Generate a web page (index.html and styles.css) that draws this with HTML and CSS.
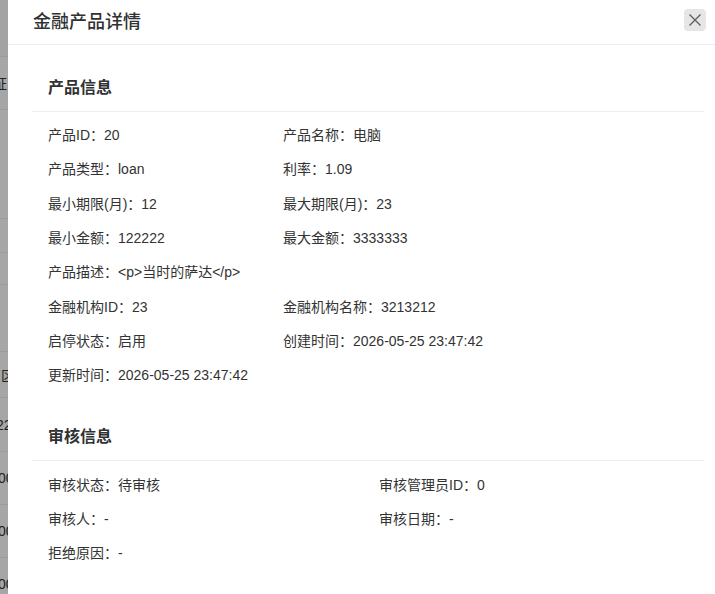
FILE: index.html
```html
<!DOCTYPE html>
<html lang="zh-CN">
<head>
    <meta charset="UTF-8">
    <meta name="viewport" content="width=device-width, initial-scale=1.0">
    <title>金融产品详情</title>
    <link rel="stylesheet" href="styles.css">
</head>
<body>
    <!-- page behind the drawer -->
    <div class="page">
        <div class="prow r-head"></div>
        <div class="prow r1"><span class="cell c-zheng">证</span></div>
        <div class="prow r2"></div>
        <div class="prow r3"></div>
        <div class="prow r4"></div>
        <div class="prow r5"></div>
        <div class="prow r6"><span class="cell c-qu">区</span></div>
        <div class="prow r7"><span class="cell c-num">222</span></div>
        <div class="prow r8"><span class="cell c-zero">000</span></div>
        <div class="prow r8"><span class="cell c-zero">000</span></div>
        <div class="prow r8"><span class="cell c-zero">000</span></div>
    </div>

    <div class="mask"></div>

    <div class="drawer">
        <div class="drawer-head">
            <span class="drawer-title">金融产品详情</span>
            <span class="close-btn">
                <svg width="14" height="14" viewBox="0 0 14 14">
                    <path d="M1.5 1.5 L12.5 12.5 M12.5 1.5 L1.5 12.5" stroke="#5f6266" stroke-width="1.4" fill="none"/>
                </svg>
            </span>
        </div>

        <div class="drawer-body">
            <div class="card">
                <div class="card-head">产品信息</div>
                <div class="card-body grid-a">
                    <div class="item">产品ID：20</div>
                    <div class="item">产品名称：电脑</div>
                    <div class="item">产品类型：loan</div>
                    <div class="item">利率：1.09</div>
                    <div class="item">最小期限(月)：12</div>
                    <div class="item">最大期限(月)：23</div>
                    <div class="item">最小金额：122222</div>
                    <div class="item">最大金额：3333333</div>
                    <div class="item full">产品描述：&lt;p&gt;当时的萨达&lt;/p&gt;</div>
                    <div class="item">金融机构ID：23</div>
                    <div class="item">金融机构名称：3213212</div>
                    <div class="item">启停状态：启用</div>
                    <div class="item">创建时间：2026-05-25 23:47:42</div>
                    <div class="item">更新时间：2026-05-25 23:47:42</div>
                </div>
            </div>

            <div class="card">
                <div class="card-head">审核信息</div>
                <div class="card-body grid-b">
                    <div class="item">审核状态：待审核</div>
                    <div class="item">审核管理员ID：0</div>
                    <div class="item">审核人：-</div>
                    <div class="item">审核日期：-</div>
                    <div class="item">拒绝原因：-</div>
                </div>
            </div>
        </div>
    </div>
</body>
</html>
```

FILE: styles.css
```css
*{
    margin: 0;
    padding: 0;
    box-sizing: border-box;
}
body{
    width: 715px;
    height: 594px;
    overflow: hidden;
    background: #fff;
    font-family: "Liberation Sans", "Noto Sans CJK SC", sans-serif;
    color: #333;
}

/* background page */
.page{
    display: flex;
    flex-direction: column;
    width: 120px;
    overflow: hidden;
}
.prow{
    border-bottom: 1px solid #ebeef5;
    display: flex;
    align-items: center;
    font-size: 14px;
    color: #333;
    white-space: nowrap;
}
.r-head{ height: 57px; background: #fafafa; }
.r1{ height: 53px; }
.r2{ height: 109px; }
.r3{ height: 34px; }
.r4{ height: 32px; }
.r5{ height: 67px; }
.r6{ height: 46px; }
.r7{ height: 54px; }
.r8{ height: 53px; }
.c-zheng{ margin-left: -7px; }
.c-qu{ margin-left: 1px; }
.c-num{ margin-left: -4px; }
.c-zero{ margin-left: -2px; }

.mask{
    position: fixed;
    inset: 0;
    background: rgba(0, 0, 0, 0.35);
}

/* drawer */
.drawer{
    position: absolute;
    top: 0;
    left: 8px;
    right: 0;
    bottom: 0;
    background: #fff;
}
.drawer-head{
    display: flex;
    align-items: center;
    justify-content: space-between;
    height: 45px;
    padding: 0 9px 4px 25px;
    border-bottom: 1px solid #ebeef5;
}
.drawer-title{
    font-size: 18px;
    font-weight: 500;
    color: #303133;
}
.close-btn{
    width: 22px;
    height: 22px;
    border-radius: 4px;
    background: #e6e6e6;
    display: flex;
    align-items: center;
    justify-content: center;
}

.drawer-body{
    padding: 16px 11px 0 24px;
}
.card{
    margin-bottom: 19px;
}
.card-head{
    height: 51px;
    padding-left: 16px;
    display: flex;
    align-items: center;
    border-bottom: 1px solid #ebeef5;
    font-size: 16px;
    font-weight: 600;
    color: #303133;
}
.card-body{
    display: grid;
    padding: 5px 16px 0;
}
.grid-a{
    grid-template-columns: 235px 1fr;
}
.grid-b{
    grid-template-columns: 331px 1fr;
}
.item{
    height: 34.3px;
    display: flex;
    align-items: center;
    font-size: 14px;
    color: #333;
    white-space: nowrap;
}
.full{
    grid-column: 1 / -1;
}
```
